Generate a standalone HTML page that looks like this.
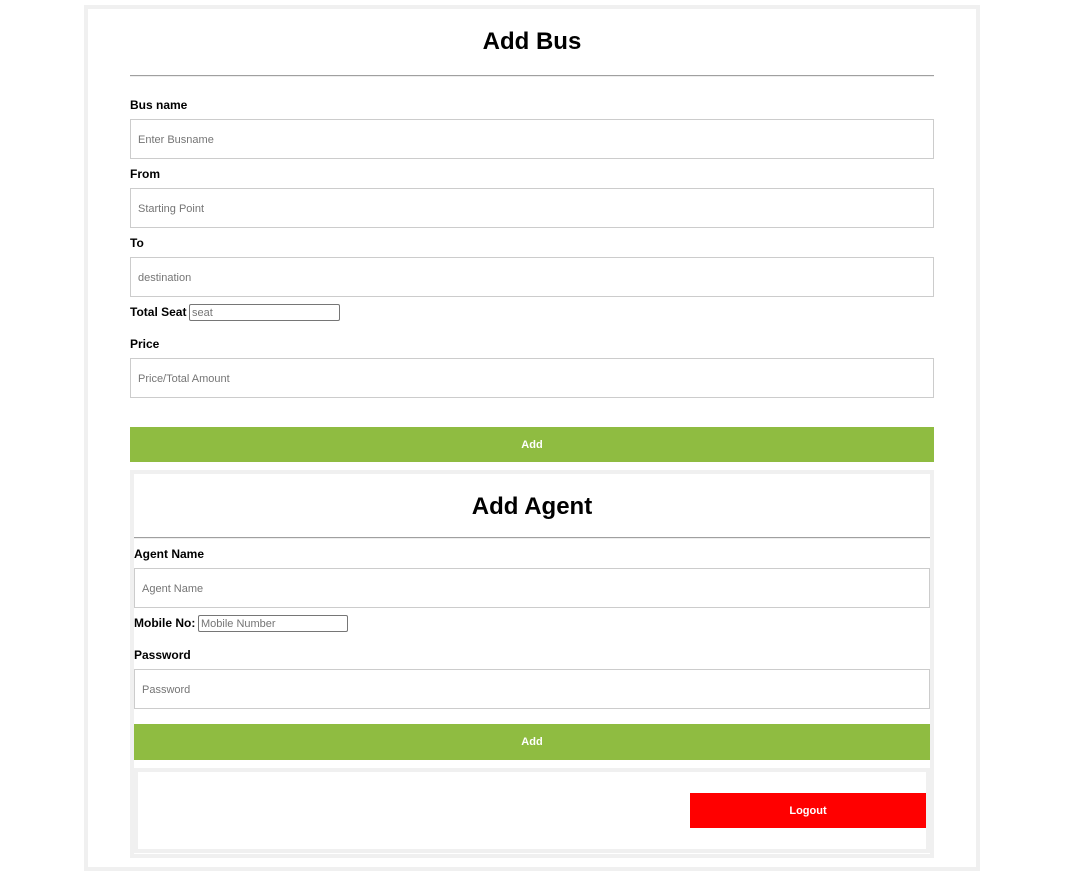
<!DOCTYPE html>
<html><head><meta charset="utf-8"><style>
*{box-sizing:border-box;margin:0;padding:0}
body{width:1066px;height:879px;background:#fff;font-family:"Liberation Sans",Arial,sans-serif;position:relative;overflow:hidden}
.a{position:absolute}
.box{border:4px solid #f0f0f0}
.h{font-weight:bold;font-size:24px;color:#000;text-align:center;line-height:28px}
.hr{height:2px;background:#a0a0a0;border-bottom:1px solid #eee}
.l{font-weight:bold;font-size:12px;color:#000;line-height:14px}
.in{border:1px solid #ccc;height:40px;font-size:11px;color:#757575;padding-left:7px;line-height:40px}
.sm{border:1px solid #767676;border-radius:2px;height:17px;font-size:11px;color:#757575;padding-left:2px;line-height:17px}
.btn{background:#8fbc41;color:#fff;font-weight:bold;font-size:11px;text-align:center}
</style></head><body>
<div class="a box" style="left:84px;top:5px;width:896px;height:866px"></div>
<div class="a h" style="left:130px;top:28px;width:804px">Add Bus</div>
<div class="a hr" style="left:130px;top:75px;width:804px"></div>
<div class="a l" style="left:130px;top:98px">Bus name</div>
<div class="a in" style="left:130px;top:119px;width:804px">Enter Busname</div>
<div class="a l" style="left:130px;top:167px">From</div>
<div class="a in" style="left:130px;top:188px;width:804px">Starting Point</div>
<div class="a l" style="left:130px;top:236px">To</div>
<div class="a in" style="left:130px;top:257px;width:804px">destination</div>
<div class="a l" style="left:130px;top:305px">Total Seat</div>
<div class="a sm" style="left:189px;top:304px;width:151px">seat</div>
<div class="a l" style="left:130px;top:337px">Price</div>
<div class="a in" style="left:130px;top:358px;width:804px">Price/Total Amount</div>
<div class="a btn" style="left:130px;top:427px;width:804px;height:35px;line-height:36px">Add</div>
<div class="a box" style="left:130px;top:470px;width:804px;height:388px"></div>
<div class="a h" style="left:134px;top:493px;width:796px">Add Agent</div>
<div class="a hr" style="left:134px;top:537px;width:796px"></div>
<div class="a l" style="left:134px;top:547px">Agent Name</div>
<div class="a in" style="left:134px;top:568px;width:796px">Agent Name</div>
<div class="a l" style="left:134px;top:616px">Mobile No:</div>
<div class="a sm" style="left:198px;top:615px;width:150px">Mobile Number</div>
<div class="a l" style="left:134px;top:648px">Password</div>
<div class="a in" style="left:134px;top:669px;width:796px">Password</div>
<div class="a btn" style="left:134px;top:724px;width:796px;height:36px;line-height:37px">Add</div>
<div class="a box" style="left:134px;top:768px;width:796px;height:85px"></div>
<div class="a btn" style="left:690px;top:793px;width:236px;height:35px;line-height:37px;background:#ff0000">Logout</div>
</body></html>
